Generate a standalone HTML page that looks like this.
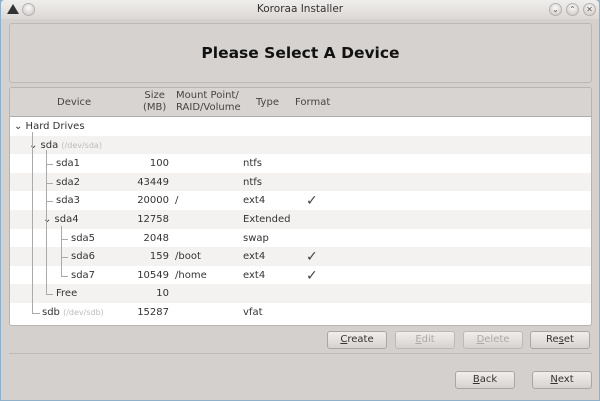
<!DOCTYPE html><html><head><style>
*{margin:0;padding:0;box-sizing:border-box}
body{width:600px;height:401px;background:#8fb0c8;font-family:"DejaVu Sans","Liberation Sans",sans-serif;font-size:10px;color:#333;position:relative;overflow:hidden}
.win{position:absolute;left:1px;top:0;width:598px;height:400px;background:#d4d0cd;border-radius:4px 4px 0 0}
.tb{position:absolute;left:0;top:0;width:598px;height:19px;background:linear-gradient(#f0eeec,#dcd8d5);border-radius:4px 4px 0 0}
.tb .t{position:absolute;left:0;width:100%;text-align:center;top:3px;font-size:10.5px;color:#333}
.circ{position:absolute;top:3px;width:13px;height:13px;border-radius:50%;background:radial-gradient(circle at 50% 35%,#fafafa,#c8c4c2);border:1px solid #b5b1ae;font-size:8px;line-height:11px;text-align:center;color:#555}
.hdr{position:absolute;left:8px;top:23px;width:583px;height:60px;border:1px solid #bcb8b5;border-radius:3px;background:#d6d2cf;text-align:center;font-weight:bold;font-size:15.5px;line-height:58px;color:#111}
.tree{position:absolute;left:8px;top:87px;width:583px;height:239px;border:1px solid #b8b4b1;border-radius:3px;background:#fff;overflow:hidden}
.th{position:absolute;left:0;top:0;width:100%;height:29px;background:#d8d4d1;border-bottom:1px solid #b0aca9;color:#444}
.th span{position:absolute;line-height:12px}
.row{position:absolute;left:0;width:100%;height:18.6px;line-height:20px}
.row.a{background:#f3f2f1}
.row span{position:absolute}
.r{text-align:right;width:60px;left:99px}
.g{color:#bbb;font-size:8px}
.ck{font-size:14px;color:#444}
.ln{position:absolute;background:#aaa}
.btn{position:absolute;height:18px;border:1px solid #aaa6a3;border-radius:3px;background:linear-gradient(#f0eeec,#d6d2cf);text-align:center;line-height:16px;color:#333;font-size:10px}
.dis{color:#aaa;border-color:#bdb9b6}
u{text-decoration:underline}
</style></head><body>
<div class="win">
<div class="tb"><div class="t">Kororaa Installer</div>
<div style="position:absolute;left:6px;top:4px;width:0;height:0;border-left:6px solid transparent;border-right:6px solid transparent;border-bottom:10px solid #333"></div>
<div class="circ" style="left:21px"></div>
<div class="circ" style="left:548px">⌄</div><div class="circ" style="left:565px">⌃</div><div class="circ" style="left:582px">✕</div>
</div>
<div class="hdr">Please Select A Device</div>
<div class="tree">
<div class="th">
<span style="left:47px;top:9px">Device</span>
<span style="left:133px;top:2px;text-align:center">Size<br>(MB)</span>
<span style="left:166px;top:2px">Mount Point/<br>RAID/Volume</span>
<span style="left:246px;top:9px">Type</span>
<span style="left:285px;top:9px">Format</span>
</div>
<div class="row" style="top:29px"><span style="left:4px">⌄ Hard Drives</span></div>
<div class="row a" style="top:47.6px"><span style="left:19px">⌄ sda <span class="g" style="position:static">(/dev/sda)</span></span></div>
<div class="row" style="top:66.2px"><span style="left:46px">sda1</span><span class="r">100</span><span style="left:233px">ntfs</span></div>
<div class="row a" style="top:84.8px"><span style="left:46px">sda2</span><span class="r">43449</span><span style="left:233px">ntfs</span></div>
<div class="row" style="top:103.4px"><span style="left:46px">sda3</span><span class="r">20000</span><span style="left:165px">/</span><span style="left:233px">ext4</span><span class="ck" style="left:296px">✓</span></div>
<div class="row a" style="top:122px"><span style="left:33px">⌄ sda4</span><span class="r">12758</span><span style="left:233px">Extended</span></div>
<div class="row" style="top:140.6px"><span style="left:61px">sda5</span><span class="r">2048</span><span style="left:233px">swap</span></div>
<div class="row a" style="top:159.2px"><span style="left:61px">sda6</span><span class="r">159</span><span style="left:165px">/boot</span><span style="left:233px">ext4</span><span class="ck" style="left:296px">✓</span></div>
<div class="row" style="top:177.8px"><span style="left:61px">sda7</span><span class="r">10549</span><span style="left:165px">/home</span><span style="left:233px">ext4</span><span class="ck" style="left:296px">✓</span></div>
<div class="row a" style="top:196.4px"><span style="left:46px">Free</span><span class="r">10</span></div>
<div class="row" style="top:215px"><span style="left:32px">sdb <span class="g" style="position:static">(/dev/sdb)</span></span><span class="r">15287</span><span style="left:233px">vfat</span></div>
<div class="ln" style="left:22px;top:44px;width:1px;height:181px"></div>
<div class="ln" style="left:22px;top:225px;width:8px;height:1px"></div>
<div class="ln" style="left:36px;top:62px;width:1px;height:144px"></div>
<div class="ln" style="left:36px;top:76px;width:7px;height:1px"></div>
<div class="ln" style="left:36px;top:95px;width:7px;height:1px"></div>
<div class="ln" style="left:36px;top:113px;width:7px;height:1px"></div>
<div class="ln" style="left:36px;top:206px;width:7px;height:1px"></div>
<div class="ln" style="left:51px;top:138px;width:1px;height:50px"></div>
<div class="ln" style="left:51px;top:151px;width:7px;height:1px"></div>
<div class="ln" style="left:51px;top:169px;width:7px;height:1px"></div>
<div class="ln" style="left:51px;top:188px;width:7px;height:1px"></div>
</div>
<div class="btn" style="left:326px;top:331px;width:60px"><u>C</u>reate</div>
<div class="btn dis" style="left:394px;top:331px;width:60px"><u>E</u>dit</div>
<div class="btn dis" style="left:462px;top:331px;width:60px"><u>D</u>elete</div>
<div class="btn" style="left:529px;top:331px;width:60px">Re<u>s</u>et</div>
<div style="position:absolute;left:8px;top:353px;width:583px;height:1px;background:#bdb9b6"></div>
<div class="btn" style="left:454px;top:371px;width:60px"><u>B</u>ack</div>
<div class="btn" style="left:531px;top:371px;width:60px"><u>N</u>ext</div>
</div>
</body></html>
